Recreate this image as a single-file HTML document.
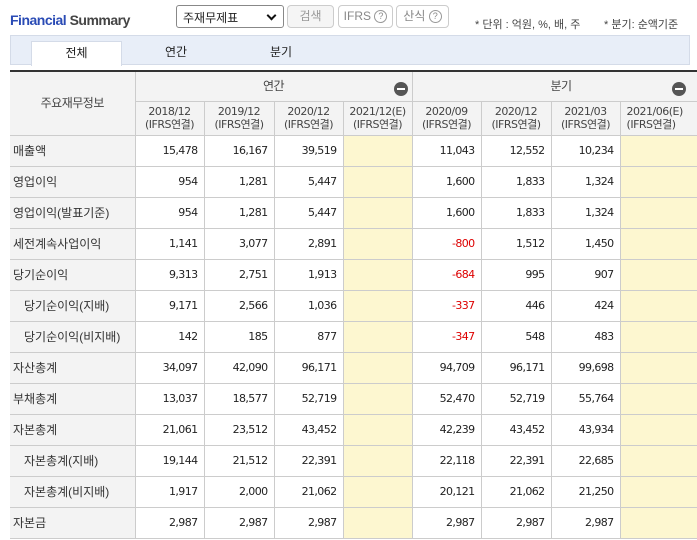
<!DOCTYPE html>
<html><head><meta charset="utf-8"><style>
*{margin:0;padding:0;box-sizing:border-box}
body{width:697px;height:540px;overflow:hidden;background:#fff;font-family:"Liberation Sans","Noto Sans CJK KR",sans-serif;color:#222;position:relative}
.title{position:absolute;left:10px;top:12px;font-size:14px;font-weight:bold;letter-spacing:-0.5px}
.title .a{color:#2a4bb5}.title .b{color:#444}
.sel{position:absolute;left:176px;top:5px;width:108px;height:23px;border:1px solid #888;border-radius:3px;font-size:12px;padding:3px 6px}
.sel:after{content:"";position:absolute;right:8px;top:6px;width:5px;height:5px;border-right:2px solid #111;border-bottom:2px solid #111;transform:rotate(45deg)}
.btn{position:absolute;top:5px;height:23px;border:1px solid #ccc;border-radius:4px;background:#f5f5f5;color:#999;font-size:12px;text-align:center;line-height:21px}
.btn2{background:#fff;color:#888}
.q{display:inline-block;width:13px;height:13px;border:1px solid #999;border-radius:50%;font-size:9px;line-height:11px;color:#888;vertical-align:1px}
.note{position:absolute;top:16px;font-size:11px;color:#444}
.tabs{position:absolute;left:10px;top:35px;width:680px;height:30px;background:#e8eef8;border:1px solid #d4dbe8}
.tab{position:absolute;top:5px;height:25px;font-size:12px;text-align:center;line-height:22px}
.tab.on{background:#fff;border:1px solid #d4dbe8;border-bottom:none}
table{position:absolute;left:10px;top:70px;border-collapse:collapse;table-layout:fixed;width:700px;border-top:2px solid #333}
td{border:1px solid #ccc;height:31px;font-size:11px;text-align:right;padding-right:6px;font-family:"DejaVu Sans","Noto Sans CJK KR",sans-serif;letter-spacing:-0.6px}
td.l{text-align:left;padding-left:3px;background:#f3f3f3;font-size:12px;letter-spacing:0;font-family:"Liberation Sans","Noto Sans CJK KR",sans-serif;color:#333;border-left:none}
td.l.i{padding-left:14px}
td.y{background:#fdf7d0}
td.r{color:#d00}
th{border:1px solid #ccc;background:#f3f3f3;font-weight:normal;font-size:11px;color:#444;letter-spacing:-0.5px;font-family:"DejaVu Sans","Noto Sans CJK KR",sans-serif;line-height:13px}
th.h{height:30px;font-size:12px;font-family:"Liberation Sans","Noto Sans CJK KR",sans-serif;position:relative}
th.s{height:34px}
.m{position:absolute;right:4px;top:10px;width:14px;height:14px;border-radius:50%;background:#555}
.m:after{content:"";position:absolute;left:3px;top:6px;width:8px;height:2px;background:#fff}
</style></head><body>
<div class="title"><span class="a">Financial</span> <span class="b">Summary</span></div>
<div class="sel">주재무제표</div>
<div class="btn" style="left:287px;width:47px">검색</div>
<div class="btn btn2" style="left:338px;width:55px">IFRS <span class="q">?</span></div>
<div class="btn btn2" style="left:396px;width:53px">산식 <span class="q">?</span></div>
<div class="note" style="left:475px">* 단위 : 억원, %, 배, 주</div>
<div class="note" style="left:604px">* 분기: 순액기준</div>
<div class="tabs">
<div class="tab on" style="left:20px;width:91px">전체</div>
<div class="tab" style="left:120px;width:90px">연간</div>
<div class="tab" style="left:225px;width:90px">분기</div>
</div>
<table>
<colgroup><col style="width:125px"><col style="width:69px"><col style="width:70px"><col style="width:69px"><col style="width:69px"><col style="width:69px"><col style="width:70px"><col style="width:69px"><col style="width:90px"></colgroup>
<tr><th rowspan="2" style="font-size:12px;border-left:none;font-family:'Liberation Sans','Noto Sans CJK KR',sans-serif">주요재무정보</th><th colspan="4" class="h">연간<span class="m"></span></th><th colspan="4" class="h">분기<span class="m" style="right:24px"></span></th></tr>
<tr><th class="s">2018/12<br>(IFRS연결)</th><th class="s">2019/12<br>(IFRS연결)</th><th class="s">2020/12<br>(IFRS연결)</th><th class="s">2021/12(E)<br>(IFRS연결)</th><th class="s">2020/09<br>(IFRS연결)</th><th class="s">2020/12<br>(IFRS연결)</th><th class="s">2021/03<br>(IFRS연결)</th><th class="s" style="text-align:left;padding-left:6px">2021/06(E)<br>(IFRS연결)</th></tr>
<tr><td class="l">매출액</td><td>15,478</td><td>16,167</td><td>39,519</td><td class="y"></td><td>11,043</td><td>12,552</td><td>10,234</td><td class="y"></td></tr>
<tr><td class="l">영업이익</td><td>954</td><td>1,281</td><td>5,447</td><td class="y"></td><td>1,600</td><td>1,833</td><td>1,324</td><td class="y"></td></tr>
<tr><td class="l">영업이익(발표기준)</td><td>954</td><td>1,281</td><td>5,447</td><td class="y"></td><td>1,600</td><td>1,833</td><td>1,324</td><td class="y"></td></tr>
<tr><td class="l">세전계속사업이익</td><td>1,141</td><td>3,077</td><td>2,891</td><td class="y"></td><td class="r">-800</td><td>1,512</td><td>1,450</td><td class="y"></td></tr>
<tr><td class="l">당기순이익</td><td>9,313</td><td>2,751</td><td>1,913</td><td class="y"></td><td class="r">-684</td><td>995</td><td>907</td><td class="y"></td></tr>
<tr><td class="l i">당기순이익(지배)</td><td>9,171</td><td>2,566</td><td>1,036</td><td class="y"></td><td class="r">-337</td><td>446</td><td>424</td><td class="y"></td></tr>
<tr><td class="l i">당기순이익(비지배)</td><td>142</td><td>185</td><td>877</td><td class="y"></td><td class="r">-347</td><td>548</td><td>483</td><td class="y"></td></tr>
<tr><td class="l">자산총계</td><td>34,097</td><td>42,090</td><td>96,171</td><td class="y"></td><td>94,709</td><td>96,171</td><td>99,698</td><td class="y"></td></tr>
<tr><td class="l">부채총계</td><td>13,037</td><td>18,577</td><td>52,719</td><td class="y"></td><td>52,470</td><td>52,719</td><td>55,764</td><td class="y"></td></tr>
<tr><td class="l">자본총계</td><td>21,061</td><td>23,512</td><td>43,452</td><td class="y"></td><td>42,239</td><td>43,452</td><td>43,934</td><td class="y"></td></tr>
<tr><td class="l i">자본총계(지배)</td><td>19,144</td><td>21,512</td><td>22,391</td><td class="y"></td><td>22,118</td><td>22,391</td><td>22,685</td><td class="y"></td></tr>
<tr><td class="l i">자본총계(비지배)</td><td>1,917</td><td>2,000</td><td>21,062</td><td class="y"></td><td>20,121</td><td>21,062</td><td>21,250</td><td class="y"></td></tr>
<tr><td class="l">자본금</td><td>2,987</td><td>2,987</td><td>2,987</td><td class="y"></td><td>2,987</td><td>2,987</td><td>2,987</td><td class="y"></td></tr>
</table>
</body></html>
